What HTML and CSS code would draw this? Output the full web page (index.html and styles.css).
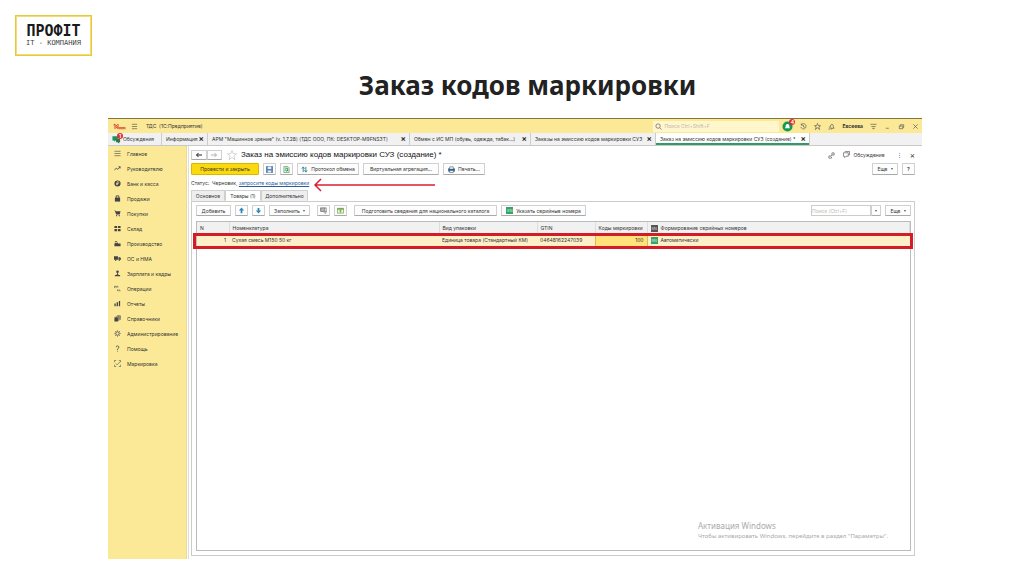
FILE: index.html
```html
<!DOCTYPE html>
<html lang="ru">
<head>
    <meta charset="UTF-8">
    <meta name="viewport" content="width=device-width, initial-scale=1.0">
    <title>Заказ кодов маркировки</title>
    <link rel="stylesheet" href="styles.css">
</head>
<body>
    <header class="slide-header">
        <div class="logo">
            <span class="logo-name">ПРОФIТ</span>
            <span class="logo-sub">IT - КОМПАНИЯ</span>
        </div>
        <h1>Заказ кодов маркировки</h1>
    </header>

    <div class="app">
        <div class="titlebar">
            <svg class="logo-1c" viewBox="0 0 26 14"><path d="M1 4l3-2v10M12 4.500a3.500 3.500 0 1 0 0 5H25M11 6.500a1.500 1.500 0 1 0 0 2" fill="none" stroke="#d8402c" stroke-width="2"/><path d="M11 11.500h14" stroke="#d8402c" stroke-width="1.500"/></svg>
            <svg class="icon" viewBox="0 0 16 16"><path d="M2 3h12M2 8h12M2 13h12"/></svg>
            <span class="app-name">ТДС &nbsp;(1С:Предприятие)</span>
            <label class="global-search">
                <svg class="icon" viewBox="0 0 16 16"><circle cx="7" cy="7" r="5"/><path d="M11 11l4 4"/></svg>
                <input type="search" placeholder="Поиск Ctrl+Shift+F" aria-label="Поиск">
            </label>
            <div class="title-icons">
                <span class="bell">
                    <svg viewBox="0 0 24 24"><circle cx="12" cy="12" r="11" fill="#109a55"/><path d="M6 16l2-3V9q4-5 8 0v4l2 3z" fill="#fff"/></svg>
                    <b class="badge">4</b>
                </span>
                <svg class="icon" viewBox="0 0 16 16"><path d="M3 4a6 6 0 1 1-1 5M3 1v4h4M8 5v4l3 1"/></svg>
                <svg class="icon" viewBox="0 0 16 16"><path d="M8 1l2 5h5l-4 3 2 6-5-4-5 4 2-6-4-3h5z"/></svg>
                <svg class="icon" viewBox="0 0 16 16"><path d="M4 11l2-2V5q3-5 6 0v4l2 3H4M7 13q2 2 3 0M1 14h4M2 9h2"/></svg>
                <span class="user">Евсеева</span>
                <svg class="icon" viewBox="0 0 16 16"><path d="M1 3h14M3 8h10M6 12l2 2 2-2z"/></svg>
                <svg class="icon" viewBox="0 0 16 16"><path d="M4 12h7"/></svg>
                <svg class="icon" viewBox="0 0 16 16"><path d="M3 7h8v6H3zM5 7V4h8v6h-2"/></svg>
                <svg class="icon" viewBox="0 0 16 16"><path d="M3 3l10 10M13 3L3 13"/></svg>
            </div>
        </div>

        <nav class="tabs">
            <a href="#" class="tab tab-talk">
                <span class="talk-icon">
                    <svg viewBox="0 0 20 20"><path d="M1 3h12v9H8l-3 3v-3H1z" fill="#159657"/><path d="M9 9h9v7h-2v3l-4-3H9z" fill="#34764f"/></svg>
                    <b class="badge">1</b>
                </span>
                Обсуждения
            </a>
            <a href="#" class="tab tab-info">Информация <b>×</b></a>
            <a href="#" class="tab tab-arm">АРМ "Машинное зрение" (v. 1.7.28) (ТДС ООО, ПК: DESKTOP-M9FNS3T) <b>×</b></a>
            <a href="#" class="tab tab-exchange">Обмен с ИС МП (обувь, одежда, табак...) <b>×</b></a>
            <a href="#" class="tab tab-orders">Заказы на эмиссию кодов маркировки СУЗ <b>×</b></a>
            <a href="#" class="tab tab-current">Заказ на эмиссию кодов маркировки СУЗ (создание) * <b>×</b></a>
        </nav>

        <div class="workspace">
            <nav class="sidebar">
                <a href="#"><svg class="icon" viewBox="0 0 16 16"><path d="M1 3h14M1 8h14M1 13h14"/></svg>Главное</a>
                <a href="#"><svg class="icon" viewBox="0 0 16 16"><path d="M1 12l4-5 4 3 5-6M10 4h4v4" stroke-width="2"/></svg>Руководителю</a>
                <a href="#"><svg class="icon solid" viewBox="0 0 16 16"><circle cx="8" cy="8" r="7"/><path d="M7 12V4h3q2 2 0 4H5M5 10h4" stroke="#fbe998" stroke-width="1.500" fill="none"/></svg>Банк и касса</a>
                <a href="#"><svg class="icon solid" viewBox="0 0 16 16"><path d="M2 6h12v9H2z"/><path d="M5 7V2h6v5" fill="none" stroke-width="2"/></svg>Продажи</a>
                <a href="#"><svg class="icon solid" viewBox="0 0 16 16"><path d="M0 1h3l1 2h11l-2 7H5L2 2z"/><circle cx="6" cy="13" r="1.500"/><circle cx="12" cy="13" r="1.500"/></svg>Покупки</a>
                <a href="#"><svg class="icon solid" viewBox="0 0 16 16"><path d="M1 2h6v5H1zM9 2h6v5H9zM1 9h6v5H1zM9 9h6v5H9z"/></svg>Склад</a>
                <a href="#"><svg class="icon solid" viewBox="0 0 16 16"><path d="M1 14V8l4-3v3l4-3v3h6v6zM2 2h5v2H2z"/></svg>Производство</a>
                <a href="#"><svg class="icon solid" viewBox="0 0 16 16"><path d="M0 3h9v8H0zM10 5h4l2 3v3h-6z"/><circle cx="4" cy="12" r="1.500"/><circle cx="12" cy="12" r="1.500"/></svg>ОС и НМА</a>
                <a href="#"><svg class="icon solid" viewBox="0 0 16 16"><circle cx="8" cy="4" r="3"/><path d="M7 7h2v3l5 2v2H2v-2l5-2z"/></svg>Зарплата и кадры</a>
                <a href="#"><svg class="icon" viewBox="0 0 16 16"><path d="M1 3h4v4M1 7V3M6 3h3v3M8 10v3h3M12 10v3h3"/></svg>Операции</a>
                <a href="#"><svg class="icon solid" viewBox="0 0 16 16"><path d="M1 8h3v6H1zM6 5h3v9H6zM11 2h3v12h-3z"/></svg>Отчеты</a>
                <a href="#"><svg class="icon solid" viewBox="0 0 16 16"><path d="M1 5h8v10H1zM4 3h8v10h-2V4H4zM7 1h8v10h-2V2H7z"/></svg>Справочники</a>
                <a href="#"><svg class="icon" viewBox="0 0 16 16"><circle cx="8" cy="8" r="4" stroke-width="2"/><path d="M8 1v2M8 13v2M1 8h2M13 8h2M3 3l2 2M11 11l2 2M3 13l2-2M11 5l2-2" stroke-width="2"/></svg>Администрирование</a>
                <a href="#"><svg class="icon" viewBox="0 0 16 16"><path d="M5 5q0-3 3-3t3 3-3 4v2M8 13v2" stroke-width="2"/></svg>Помощь</a>
                <a href="#"><svg class="icon" viewBox="0 0 16 16"><path d="M1 5V1h4M11 1h4v4M1 11v4h4M15 11v4h-4M4 8l3 3 7-7"/></svg>Маркировка</a>
            </nav>

            <main>
                <div class="form-title">
                    <div class="history">
                        <button type="button" aria-label="Назад"><svg viewBox="0 0 16 12"><path d="M14 6H3M7 2L3 6l4 4" fill="none" stroke="#222" stroke-width="2"/></svg></button>
                        <button type="button" aria-label="Вперед"><svg viewBox="0 0 16 12"><path d="M2 6h11M9 2l4 4-4 4" fill="none" stroke="#999" stroke-width="1.500"/></svg></button>
                    </div>
                    <svg class="star" viewBox="0 0 20 20"><path d="M10 1l2.500 6.500H19l-5 4.500 2 7-6-4-6 4 2-7-5-4.500h6.500z" fill="none" stroke="#aaa"/></svg>
                    <h2>Заказ на эмиссию кодов маркировки СУЗ (создание) *</h2>
                    <div class="form-links">
                        <svg class="icon" viewBox="0 0 16 16"><path d="M7 9L2 9v5h6v-3M9 7V2h5v5H9L6 10"/></svg>
                        <a href="#"><svg class="icon" viewBox="0 0 16 16"><path d="M4 1h11v8h-2M1 4h11v8H7l-3 3v-3H1z"/></svg>Обсуждение</a>
                        <span class="dots">⋮</span>
                        <span class="close">×</span>
                    </div>
                </div>

                <div class="commands">
                    <button type="button" class="primary">Провести и закрыть</button>
                    <button type="button" class="square" aria-label="Записать"><svg class="icon" viewBox="0 0 16 16"><path d="M1 1h14v14H1z" fill="#5a87b9" stroke="#3d6797"/><path d="M4 1h8v6H4zM4 10h8v5H4z" fill="#e7eef5" stroke="none"/></svg></button>
                    <button type="button" class="square" aria-label="Провести"><svg class="icon" viewBox="0 0 16 16"><path d="M2 1h9l3 3v11H2z" fill="#dff0df" stroke="#6a8a6a"/><path d="M5 5h5v6M5 8l3 4 4-3" stroke="#1c9a50" stroke-width="2"/></svg></button>
                    <button type="button" class="protocol"><svg class="icon" viewBox="0 0 16 16"><path d="M5 14V3M2 6l3-4 3 4M11 2v11M8 10l3 4 3-4" stroke="#257a92" stroke-width="2"/></svg>Протокол обмена</button>
                    <button type="button" class="aggregation">Виртуальная агрегация...</button>
                    <button type="button" class="print"><svg class="icon" viewBox="0 0 16 16"><path d="M1 6h14v6H1z" fill="#3b6180" stroke="#3b6180"/><path d="M4 6V2h8v4M4 10h8v5H4z" fill="#fff" stroke="#3b6180"/></svg>Печать...</button>
                    <button type="button" class="more push">Еще <i class="caret"></i></button>
                    <button type="button" class="help">?</button>
                </div>

                <p class="status">Статус: &nbsp;Черновик, <a href="#">запросите коды маркировки</a>
                    <svg class="arrow" viewBox="0 0 123 14"><path d="M122 7H2M8 1L2 7l6 6" fill="none" stroke="#d92035" stroke-width="1.500"/></svg>
                </p>

                <div class="pages">
                    <button type="button">Основное</button>
                    <button type="button" class="active">Товары (1)</button>
                    <button type="button">Дополнительно</button>
                </div>

                <section class="page">
                    <div class="toolbar">
                        <button type="button" class="add">Добавить</button>
                        <button type="button" class="square" aria-label="Вверх"><svg class="icon" viewBox="0 0 16 16"><path d="M8 1l6 7h-4v6H6V8H2z" fill="#2e86b5" stroke="none"/></svg></button>
                        <button type="button" class="square" aria-label="Вниз"><svg class="icon" viewBox="0 0 16 16"><path d="M8 15l6-7h-4V2H6v6H2z" fill="#2e86b5" stroke="none"/></svg></button>
                        <button type="button" class="fill">Заполнить <i class="caret"></i></button>
                        <button type="button" class="square gap" aria-label="Сканировать"><svg class="icon" viewBox="0 0 16 16"><path d="M1 2h13v8H1zM4 2v8M7 2v8M10 2v8M9 12l3 3 3-5"/></svg></button>
                        <button type="button" class="square" aria-label="Таблица"><svg class="icon" viewBox="0 0 16 16"><path d="M1 3h14v11H1z" fill="#eef5dc" stroke="#6f9a45"/><path d="M1 3h14v3H1z" fill="#5ea03d" stroke="none"/><path d="M5 9h6M8 6v7" stroke="#5ea03d"/></svg></button>
                        <button type="button" class="catalog gap">Подготовить сведения для национального каталога</button>
                        <button type="button" class="serial"><span class="sn">SN</span>Указать серийные номера</button>
                        <div class="search push">
                            <input type="text" placeholder="Поиск (Ctrl+F)" aria-label="Поиск">
                            <button type="button" aria-label="Список"><i class="caret"></i></button>
                        </div>
                        <button type="button" class="more">Еще <i class="caret"></i></button>
                    </div>

                    <div class="grid">
                        <table>
                            <colgroup>
                                <col class="col-n"><col class="col-name"><col class="col-pack"><col class="col-gtin"><col class="col-codes"><col>
                            </colgroup>
                            <thead>
                                <tr>
                                    <th>N</th>
                                    <th>Номенклатура</th>
                                    <th>Вид упаковки</th>
                                    <th>GTIN</th>
                                    <th>Коды маркировки</th>
                                    <th><span class="sn dark">SN</span>Формирование серийных номеров</th>
                                </tr>
                            </thead>
                            <tbody>
                                <tr>
                                    <td class="num">1</td>
                                    <td>Сухая смесь М150 50 кг</td>
                                    <td>Единица товара (Стандартный КМ)</td>
                                    <td>04648162247039</td>
                                    <td class="num codes">100</td>
                                    <td><span class="sn">SN</span>Автоматически</td>
                                </tr>
                            </tbody>
                        </table>
                        <div class="highlight"></div>
                        <div class="activation">
                            <p class="activation-title">Активация Windows</p>
                            <p>Чтобы активировать Windows, перейдите в раздел "Параметры".</p>
                        </div>
                    </div>
                </section>
            </main>
        </div>
    </div>
</body>
</html>
```

FILE: styles.css
```css
* {
    box-sizing: border-box;
}

body {
    margin: 0;
    background: #fff;
    color: #333;
    font-family: Inter, "Liberation Sans", Arial, sans-serif;
    font-size: 5px;
    line-height: 8px;
}

a {
    color: inherit;
    text-decoration: none;
}

p, h1, h2 {
    margin: 0;
}

button, input {
    font: inherit;
    color: inherit;
    padding: 0;
    margin: 0;
}

.icon {
    width: 7px;
    height: 7px;
    flex: none;
    fill: none;
    stroke: #555;
    stroke-width: 1.5;
}

.icon.solid {
    fill: #444;
    stroke: #444;
    stroke-width: 0;
}

/* шапка слайда */
.slide-header {
    padding: 15px 0 0 15px;
}

.logo {
    display: flex;
    flex-direction: column;
    align-items: center;
    justify-content: center;
    width: 77px;
    height: 41px;
    border: 1px solid #e8c93c;
    outline: 1px solid #f3dc78;
    outline-offset: -2px;
}

.logo-name {
    font: bold 15px/15px "DejaVu Sans Mono", monospace;
    color: #1a1a1a;
}

.logo-sub {
    font: 7px/9px "DejaVu Sans Mono", monospace;
    color: #444;
}

h1 {
    padding: 11px 0 15px 16px;
    text-align: center;
    font: bold 26px/36px "Noto Sans", sans-serif;
    color: #222;
}

.app {
    display: flex;
    flex-direction: column;
    min-height: 441px;
    margin: 0 102px 0 108px;
    border-top: 1px solid #82763d;
}

/* заголовок окна */
.titlebar {
    display: flex;
    align-items: center;
    height: 14px;
    padding: 0 3px 0 5px;
    background: #fbe998;
}

.logo-1c {
    width: 13px;
    height: 7px;
    margin-right: 5px;
}

.app-name {
    margin-left: 8px;
    color: #333;
}

.global-search {
    display: flex;
    align-items: center;
    gap: 2px;
    width: 126px;
    height: 11px;
    margin-left: auto;
    padding-left: 2px;
    background: #fff6cc;
}

.global-search input {
    width: 100%;
    border: 0;
    background: none;
}

::placeholder {
    color: #b9b9b0;
    opacity: 1;
}

.title-icons {
    display: flex;
    align-items: center;
    gap: 7px;
    margin-left: 3px;
}

.user {
    font-weight: bold;
}

.bell, .talk-icon {
    position: relative;
    display: flex;
}

.bell svg {
    width: 11px;
    height: 11px;
}

.badge {
    position: absolute;
    top: -2px;
    right: -2px;
    width: 6px;
    height: 6px;
    border-radius: 50%;
    background: #e02b35;
    color: #fff;
    line-height: 6px;
    text-align: center;
}

/* открытые вкладки */
.tabs {
    display: flex;
    height: 13px;
    background: #f1f1f1;
    border-bottom: 1px solid #c9c9c9;
}

.tab {
    display: flex;
    align-items: center;
    justify-content: space-between;
    padding: 0 3px 0 4px;
    border-right: 1px solid #ccc;
    white-space: nowrap;
}

.tab b {
    font-size: 8px;
    color: #333;
}

.tab .badge {
    font-size: 5px;
    color: #fff;
}

.tab-talk {
    width: 54px;
    justify-content: flex-start;
    gap: 2px;
}

.tab-info {
    width: 46px;
}

.tab-arm {
    width: 202px;
}

.tab-exchange {
    width: 121px;
}

.tab-orders {
    width: 125px;
}

.tab-current {
    width: 154px;
    background: #fff;
    box-shadow: inset 0 -2px #2b9c63;
}

.talk-icon svg {
    width: 9px;
    height: 9px;
}

.workspace {
    display: flex;
    flex: 1;
}

/* разделы */
.sidebar {
    width: 79px;
    padding: 0 6px;
    background: #fbe998;
    border-right: 1px solid #eadb94;
}

.sidebar a {
    display: flex;
    align-items: center;
    gap: 6px;
    height: 15px;
    white-space: nowrap;
}

main {
    display: flex;
    flex: 1;
    flex-direction: column;
    min-width: 0;
    padding: 3px 7px 3px 2px;
    border-left: 1px solid #ddd;
    margin-left: 1px;
}

button {
    display: flex;
    align-items: center;
    justify-content: center;
    gap: 3px;
    height: 12px;
    background: #fdfdfd;
    border: 1px solid #d0d0d0;
    border-bottom-color: #aaa;
    border-radius: 1px;
    white-space: nowrap;
}

.form-title {
    display: flex;
    align-items: center;
    height: 12px;
}

.history {
    display: flex;
    width: 31px;
}

.history button {
    flex: 1;
    height: 10px;
}

.history svg {
    width: 8px;
    height: 6px;
}

.star {
    width: 10px;
    height: 10px;
    margin: 0 4px 0 5px;
}

h2 {
    font: 8px/10px "Liberation Sans", Arial, sans-serif;
    color: #111;
}

.form-links {
    display: flex;
    align-items: center;
    gap: 8px;
    margin-left: auto;
}

.form-links a {
    display: flex;
    gap: 3px;
}

.dots {
    margin-left: 4px;
}

.close {
    font-size: 8px;
}

.commands {
    display: flex;
    align-items: center;
    gap: 4px;
    margin-top: 2px;
}

.primary {
    width: 68px;
    background: #fbd90f;
    border-color: #d9b900;
    color: #333;
}

.square {
    width: 13px;
}

.protocol {
    width: 62px;
}

.aggregation {
    width: 76px;
}

.print {
    width: 42px;
}

.more {
    width: 26px;
}

.help {
    width: 13px;
    font-weight: bold;
}

.push {
    margin-left: auto;
}

.caret {
    border: 1px solid transparent;
    border-top: 2px solid #555;
    border-bottom: 0;
}

.status {
    position: relative;
    margin-top: 4px;
}

.status a {
    color: #2a5f9e;
    text-decoration: underline;
}

/* красная стрелка к ссылке */
.arrow {
    position: absolute;
    left: 122px;
    top: -1px;
    width: 123px;
    height: 14px;
}

.pages {
    display: flex;
    margin-top: 3px;
}

.pages button {
    width: 47px;
    height: 11px;
    background: #eee;
    border-bottom: 0;
}

.pages button:first-child {
    width: 34px;
}

.pages .active {
    width: 36px;
    background: #fff;
}

.page {
    display: flex;
    flex: 1;
    flex-direction: column;
    padding: 3px 3px 4px 4px;
    border: 1px solid #ccc;
}

.toolbar {
    display: flex;
    align-items: center;
    gap: 4px;
}

.toolbar button {
    height: 11px;
}

.add {
    width: 35px;
}

.fill {
    width: 41px;
}

.gap {
    margin-left: 3px;
}

.catalog {
    width: 143px;
}

.serial {
    width: 85px;
    gap: 0;
}

.search {
    display: flex;
    width: 70px;
}

.search input {
    flex: 1;
    min-width: 0;
    border: 1px solid #ccc;
}

.search button {
    width: 10px;
}

.sn {
    display: inline-block;
    width: 7px;
    height: 7px;
    margin-right: 3px;
    background: #37a269;
    color: #d5f0de;
    font-size: 4px;
    line-height: 7px;
    text-align: center;
    vertical-align: middle;
}

.sn.dark {
    background: #555;
    color: #ddd;
}

/* табличная часть */
.grid {
    position: relative;
    display: flex;
    flex: 1;
    flex-direction: column;
    justify-content: space-between;
    margin-top: 5px;
    border: 1px solid #bbb;
}

table {
    width: 100%;
    table-layout: fixed;
    border-collapse: collapse;
}

.col-n {
    width: 32px;
}

.col-name {
    width: 210px;
}

.col-pack {
    width: 98px;
}

.col-gtin {
    width: 58px;
}

.col-codes {
    width: 52px;
}

th, td {
    height: 12px;
    padding: 0 3px;
    text-align: left;
    font-weight: normal;
    white-space: nowrap;
}

th {
    background: #f1f1f1;
    border-right: 1px solid #ddd;
}

td {
    background: #fdf0c8;
    color: #333;
}

.num {
    text-align: right;
}

.codes {
    background: #ffe37a;
    border: 1px solid #dcbb4c;
}

.highlight {
    position: absolute;
    top: 11px;
    left: -4px;
    right: -3px;
    height: 16px;
    border: 3px solid #d31c26;
}

.activation {
    align-self: flex-end;
    width: 212px;
    padding-bottom: 9px;
    color: #aaa;
    font: 6px/10px "Noto Sans", sans-serif;
}

.activation-title {
    font-size: 8px;
}
```
